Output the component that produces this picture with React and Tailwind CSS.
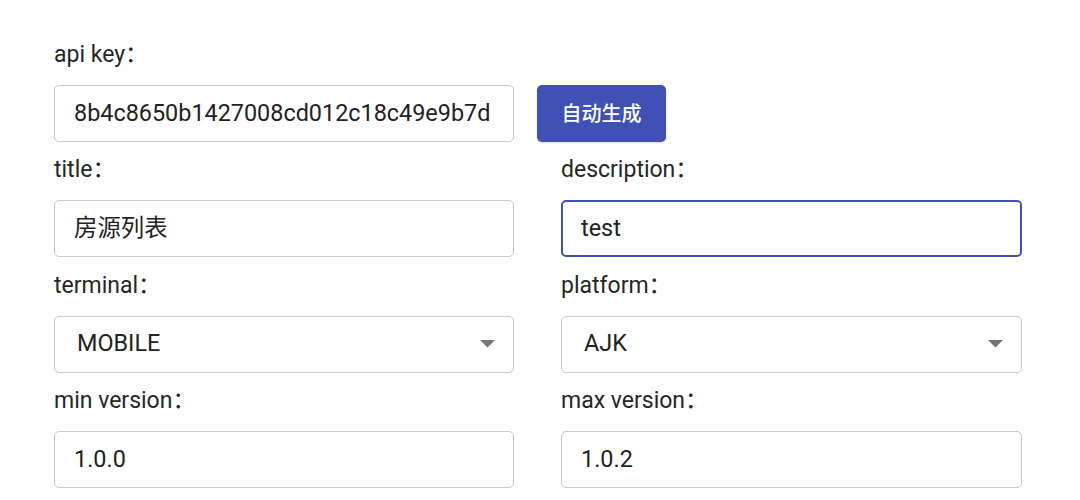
import React from "react";

const font = { fontFamily: 'Roboto, "Noto Sans CJK SC", sans-serif' };

function Label({ children }) {
  return (
    <div className="h-[30px] leading-[30px] text-[23px] text-[#262626] mb-[15px]">{children}</div>
  );
}

function Field({ label, value, focused }) {
  return (
    <div className="flex flex-col mb-[13.25px]">
      <Label>{label}</Label>
      <div
        className={
          focused
            ? "h-[57px] rounded-[5px] border-2 border-[#3f51b5] px-[18px] flex items-center text-[23.4px] text-[#222] bg-white"
            : "h-[57px] rounded-[5px] border border-[#c8c8c8] px-[19px] flex items-center text-[23.4px] text-[#222] bg-white"
        }
      >
        {value}
      </div>
    </div>
  );
}

function SelectField({ label, value }) {
  return (
    <div className="flex flex-col mb-[13.25px]">
      <Label>{label}</Label>
      <div className="h-[57px] rounded-[5px] border border-[#c8c8c8] pl-[22px] pr-[18px] flex items-center justify-between text-[23.4px] text-[#222] bg-white">
        <span>{value}</span>
        <svg width="15" height="8" viewBox="0 0 15 8">
          <path d="M0 0 L15 0 L7.5 7.5 Z" fill="#757575" />
        </svg>
      </div>
    </div>
  );
}

export default function App() {
  return (
    <div className="w-[1080px] h-[500px] bg-white overflow-hidden pt-[40px] pl-[54px]" style={font}>
      <div className="flex flex-col mb-[13.25px]">
        <Label>api key：</Label>
        <div className="flex items-center gap-[23px]">
          <div className="w-[460px] h-[57px] rounded-[5px] border border-[#c8c8c8] px-[19px] flex items-center text-[23.4px] text-[#222]">
            8b4c8650b1427008cd012c18c49e9b7d
          </div>
          <button className="w-[129px] h-[57px] rounded-[5px] bg-[#3f51b5] text-white text-[20px] font-medium shadow-[0_1px_2px_rgba(0,0,0,0.15)]">
            自动生成
          </button>
        </div>
      </div>
      <div className="grid grid-cols-[460px_461px] gap-x-[47px]">
        <Field label="title：" value="房源列表" />
        <Field label="description：" value="test" focused />
        <SelectField label="terminal：" value="MOBILE" />
        <SelectField label="platform：" value="AJK" />
        <Field label="min version：" value="1.0.0" />
        <Field label="max version：" value="1.0.2" />
      </div>
    </div>
  );
}
